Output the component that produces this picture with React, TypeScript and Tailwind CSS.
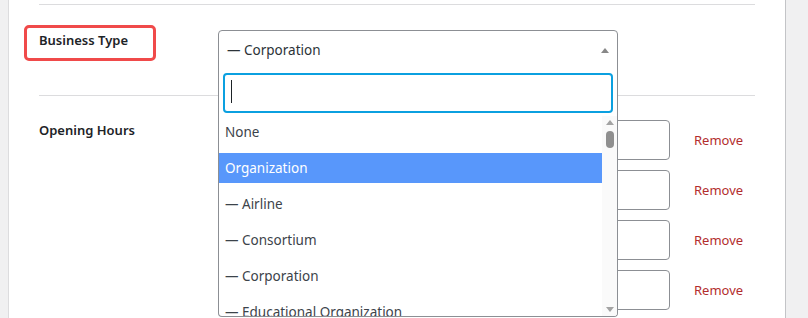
import { ChangeEvent, useState } from 'react'

const options = [
  'None',
  'Organization',
  '— Airline',
  '— Consortium',
  '— Corporation',
  '— Educational Organization',
]

function Triangle({ up = true, className = '' }: { up?: boolean; className?: string }) {
  return (
    <svg width="8" height="5" viewBox="0 0 8 5" className={className}>
      <path d={up ? 'M0 5 L4 0 L8 5 Z' : 'M0 0 L4 5 L8 0 Z'} fill="currentColor" />
    </svg>
  )
}

function HoursRow() {
  return (
    <div className="flex items-center">
      <div className="flex h-[40px] w-[452px] rounded-[4px] border border-[#8c8f94] bg-white" />
      <a className="ml-[24px] pt-[2px] text-[13px] text-[#b32d2e]">Remove</a>
    </div>
  )
}

export default function App() {
  const [query, setQuery] = useState('')

  return (
    <div
      className="flex h-[318px] w-[808px] overflow-hidden bg-[#f0f0f1] text-[13.5px] text-[#1d2327]"
      style={{ fontFamily: '"Noto Sans", "Open Sans", sans-serif' }}
    >
      <div className="w-[9px] shrink-0 border-r border-[#dcdcde]" />
      <div className="flex w-[776px] shrink-0 flex-col bg-white px-[30px]">
        <div className="mt-[4px] border-t border-[#dcdcde]" />

        {/* business type */}
        <div className="relative z-10 flex pt-[25px] pb-[25px]">
          <div className="relative w-[179px] shrink-0">
            <div className="absolute left-[-15px] top-[-5px] h-[36px] w-[132px] rounded-[5px] border-[3px] border-[#f04a4a]" />
            <span className="block text-[13px] font-semibold leading-[20px]">Business Type</span>
          </div>
          <div className="relative w-[400px]">
            <div className="flex h-[40px] items-center justify-between rounded-t-[4px] border border-[#8c8f94] pl-[8px] pr-[8px] text-[#2c3338]">
              <span>— Corporation</span>
              <Triangle className="text-[#888]" />
            </div>
            <div className="absolute left-0 right-0 top-[39px] flex h-[248px] flex-col overflow-hidden rounded-b-[4px] border border-t-0 border-[#8c8f94] bg-white">
              <div className="relative p-[4px] pb-[3px]">
                <input
                  value={query}
                  onChange={(e: ChangeEvent<HTMLInputElement>) => setQuery(e.target.value)}
                  className="h-[40px] w-full rounded-[4px] border-2 border-[#0ba0e0] px-[6px] caret-transparent outline-none"
                />
                {query === '' && (
                  <span className="pointer-events-none absolute left-[12px] top-[11px] h-[23px] w-[1px] bg-[#1d2327]" />
                )}
              </div>
              <div className="flex min-h-0 flex-1">
                <div className="flex flex-1 flex-col gap-[6px] overflow-hidden pt-[1px]">
                  {options.map((o) => (
                    <div
                      key={o}
                      className={`flex h-[30px] shrink-0 items-center px-[6px] ${
                        o === 'Organization' ? 'bg-[#5897fb] text-white' : 'text-[#3c434a]'
                      }`}
                    >
                      {o}
                    </div>
                  ))}
                </div>
                <div className="flex w-[15px] shrink-0 flex-col items-center bg-[#fafafa] pt-[4px] pb-[4px]">
                  <Triangle className="text-[#a3a3a3]" />
                  <div className="mt-[6px] h-[17px] w-[8px] rounded-full bg-[#8f8f8f]" />
                  <div className="flex-1" />
                  <Triangle up={false} className="text-[#a3a3a3]" />
                </div>
              </div>
            </div>
          </div>
        </div>

        <div className="border-t border-[#dcdcde]" />

        {/* opening hours */}
        <div className="flex pt-[24px]">
          <div className="w-[179px] shrink-0 text-[13px] font-semibold leading-[20px]">Opening Hours</div>
          <div className="flex flex-col gap-[10px]">
            <HoursRow />
            <HoursRow />
            <HoursRow />
            <HoursRow />
          </div>
        </div>
      </div>
      <div className="flex-1 border-l border-[#c3c4c7]" />
    </div>
  )
}
